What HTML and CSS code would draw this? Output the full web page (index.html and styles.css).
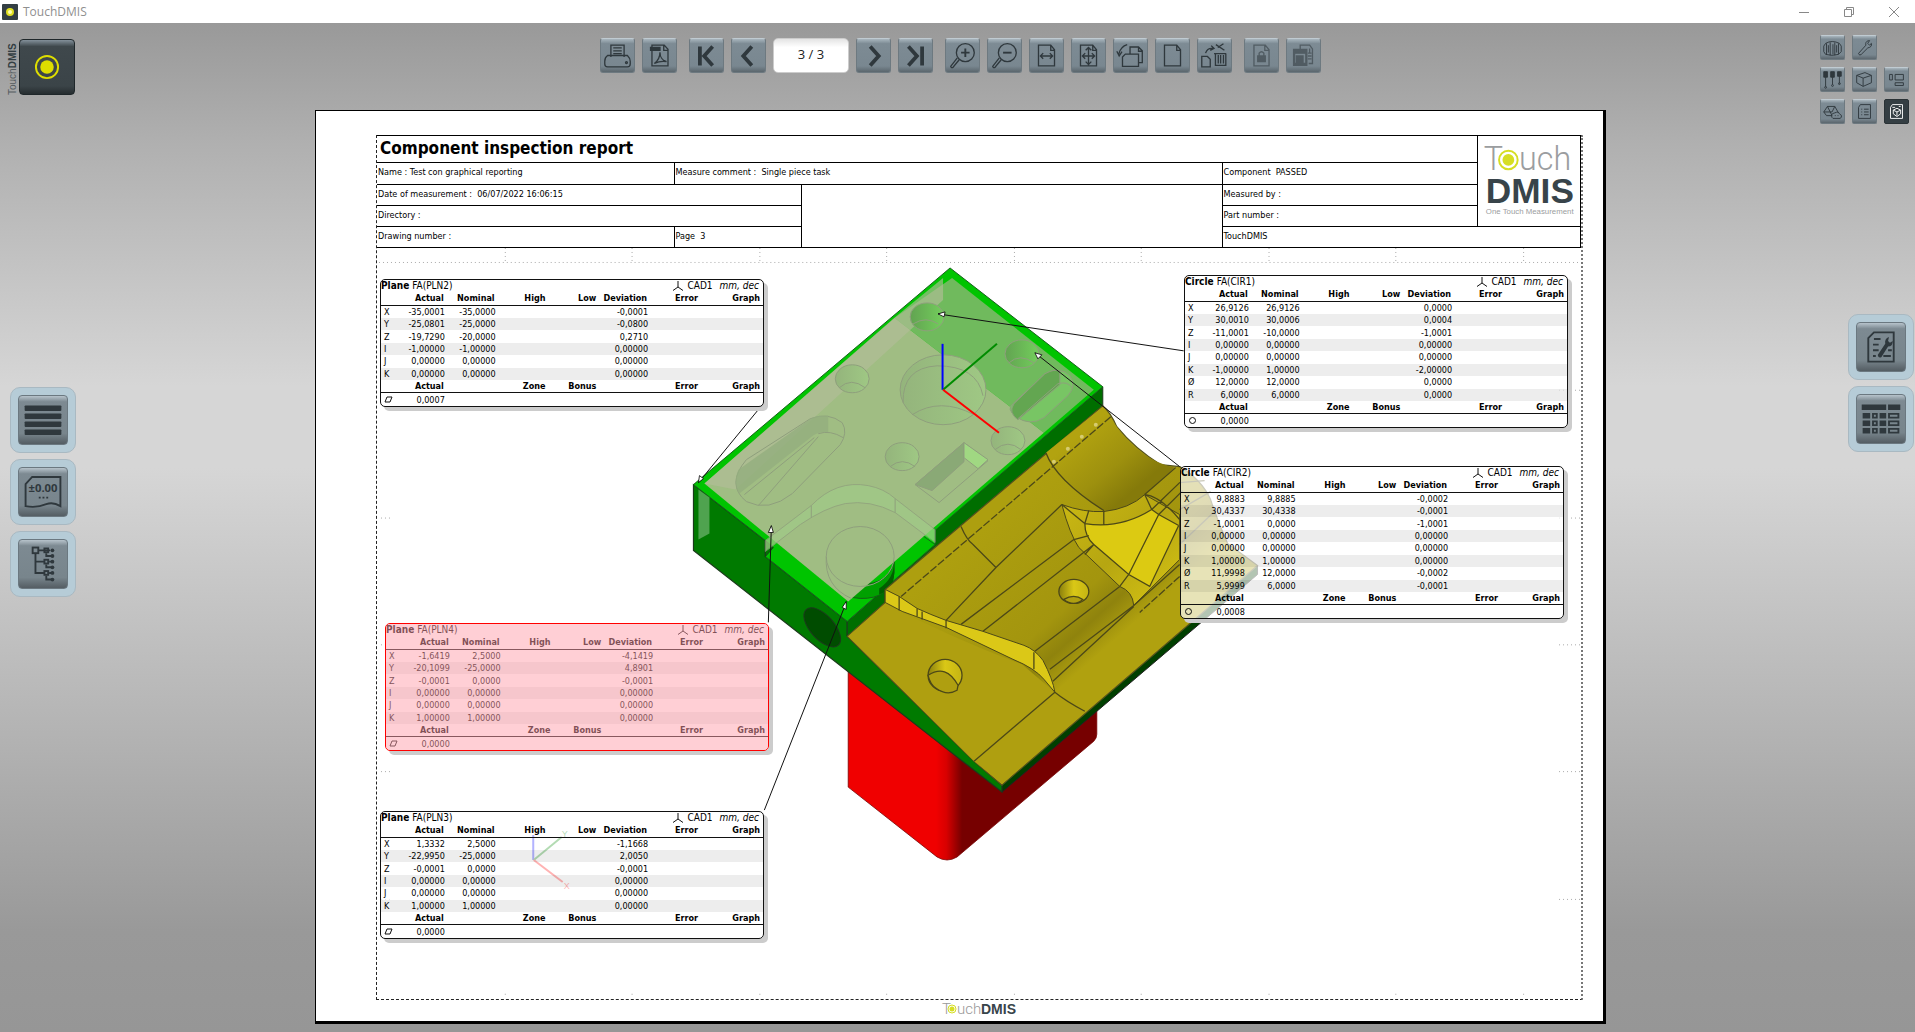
FILE: index.html
```html
<!DOCTYPE html>
<html lang="en">
<head>
<meta charset="utf-8">
<title>TouchDMIS</title>
<link rel="stylesheet" href="styles.css">
</head>
<body>
<header class="titlebar">
  <svg class="app-icon" viewBox="0 0 16 16"><rect width="16" height="16" rx="1" fill="#333e43"/><circle cx="8" cy="8" r="4" fill="#dfdf20"/><circle cx="8" cy="8" r="2" fill="#ffffb0"/></svg>
  <span class="app-name">TouchDMIS</span>
  <div class="window-controls">
    <button aria-label="Minimize"><svg viewBox="0 0 12 12"><path d="M1 6.500h10"/></svg></button>
    <button aria-label="Restore"><svg viewBox="0 0 12 12"><path d="M1.500 3.500h7v7h-7zM3.500 3v-1.500h7v7H9"/></svg></button>
    <button aria-label="Close"><svg viewBox="0 0 12 12"><path d="M1 1l10 10M11 1L1 11"/></svg></button>
  </div>
</header>

<main class="workspace">
  <aside class="side side-left">
    <div class="brand">
      <span class="brand-text">Touch<b>DMIS</b></span>
      <button class="brand-button" aria-label="TouchDMIS menu"><svg viewBox="0 0 56 56"><circle cx="28" cy="28" r="11.500" fill="none" stroke="#dede00" stroke-width="2"/><circle cx="28" cy="28" r="7" fill="#dede00"/></svg></button>
    </div>
    <nav class="rail">
      <button class="rail-button" aria-label="List"><span><svg viewBox="0 0 51 51"><g fill="#2f383d"><rect x="6" y="10" width="39" height="6" rx="1"/><rect x="6" y="18.500" width="39" height="6" rx="1"/><rect x="6" y="27" width="39" height="6" rx="1"/><rect x="6" y="35.500" width="39" height="6" rx="1"/></g></svg></span></button>
      <button class="rail-button" aria-label="Tolerances"><span><svg viewBox="0 0 51 51"><path class="ln" d="M14 9.500h30v31c-5-3-10-4-15-2s-12 4-22 2V17z"/><text x="25.500" y="26" class="tol">±0.00</text><path d="M21 31.500h2m2 0h2m2 0h2" class="ln"/></svg></span></button>
      <button class="rail-button" aria-label="Feature tree"><span><svg viewBox="0 0 51 51"><path class="ln" d="M17.500 14v21h9M21 11h12M17.500 23h9M29 14v3h6M29 26v3h6M32 23h4M29 38v4h6M32 35h4"/><g class="ln"><rect x="14.500" y="8" width="6" height="6"/><rect x="27" y="9" width="4" height="4"/><rect x="27" y="21" width="4" height="4"/><rect x="27" y="33" width="4" height="4"/></g><g fill="#2f383d"><circle cx="35.500" cy="11" r="2"/><circle cx="35.500" cy="17" r="2"/><circle cx="35.500" cy="23" r="2"/><circle cx="35.500" cy="29" r="2"/><circle cx="35.500" cy="35" r="2"/><circle cx="35.500" cy="42" r="2"/></g></svg></span></button>
    </nav>
  </aside>

  <section class="center">
    <div class="toolbar">
      <div class="group">
        <button class="tool" aria-label="Print"><svg viewBox="0 0 35 35"><path d="M10.500 19V6.500h14V19M13 9.500h9M13 12.500h9M13 15.500h9M7 17.500h21q3 3 3 6v3q0 3-3 3H7q-3 0-3-3v-3q0-4 3-6z"/><circle cx="27" cy="25" r="1"/></svg></button>
        <button class="tool" aria-label="Export PDF"><svg viewBox="0 0 35 35"><path d="M9.500 12v16.500h17V11l-4-4.500h-13v3M22 7v5h5"/><path d="M8 9h10v3H8z" fill="#2f383d"/><path d="M12 26c4-3 6-7 6-12 0 5 3 9 7 10-5-1-9 0-13 2z"/></svg></button>
      </div>
      <div class="group">
        <button class="tool" aria-label="First page"><svg viewBox="0 0 35 35"><path class="fat" d="M10.500 8v20M24 8l-9 10 9 10"/></svg></button>
        <button class="tool" aria-label="Previous page"><svg viewBox="0 0 35 35"><path class="fat" d="M21 8l-9 10 9 10"/></svg></button>
        <input class="page-box" aria-label="Page" value="3 / 3">
        <button class="tool" aria-label="Next page"><svg viewBox="0 0 35 35"><path class="fat" d="M14 8l9 10-9 10"/></svg></button>
        <button class="tool" aria-label="Last page"><svg viewBox="0 0 35 35"><path class="fat" d="M10 8l9 10-9 10M24.500 8v20"/></svg></button>
      </div>
      <div class="group">
        <button class="tool" aria-label="Zoom in"><svg viewBox="0 0 35 35"><circle cx="20.500" cy="14.500" r="9.500"/><path d="M14 22l-6.500 8q-2 1-2.500-1L12 20"/><path stroke-width="2" d="M16 14.500h9M20.500 10v9"/></svg></button>
        <button class="tool" aria-label="Zoom out"><svg viewBox="0 0 35 35"><circle cx="20.500" cy="14.500" r="9.500"/><path d="M14 22l-6.500 8q-2 1-2.500-1L12 20"/><path stroke-width="2" d="M16 14.500h9"/></svg></button>
        <button class="tool" aria-label="Fit width"><svg viewBox="0 0 35 35"><path d="M9 6.500h13l4 5v17H9zM22 7v5h4M11 18h13M14 15l-3 3 3 3M21 15l3 3-3 3"/></svg></button>
        <button class="tool" aria-label="Fit page"><svg viewBox="0 0 35 35"><path d="M9 6.500h13l4 5v17H9zM22 7v5h4M11 18h13M14 15l-3 3 3 3M21 15l3 3-3 3M17.500 9v18M14.500 12l3-3 3 3M14.500 24l3 3 3-3"/></svg></button>
        <button class="tool" aria-label="Rotate page"><svg viewBox="0 0 35 35"><path d="M17 16V8.500h9l4 4V25h-4M9 19l3-3h14v13H9zM26 9v4h4M14 6Q7 8 5 16M3 13l2.500 5 3-4.500"/></svg></button>
        <button class="tool" aria-label="New page"><svg viewBox="0 0 35 35"><path d="M9 6.500h13l4 5v17H9zM22 7v5h4"/></svg></button>
        <button class="tool" aria-label="Delete page"><svg viewBox="0 0 35 35"><path d="M4 18.500h6l3 3v8H4zM17 15.500h13M18.500 16v12h11V16M21.500 17v9M24 17v9M27 17v9M19 6l9 6M21 9l6-4M8 15q2-6 8-5M14 7l3 3-4 2" /></svg></button>
      </div>
      <div class="group">
        <button class="tool" disabled aria-label="Lock report"><svg viewBox="0 0 35 35"><path d="M9.500 6.500h12l4 5v17h-16zM21 7v5h4M15 18v-3q2.500-3 5 0v3"/><path d="M13.500 18h8v6h-8z" fill="#2f383d"/></svg></button>
        <button class="tool" disabled aria-label="Report template"><svg viewBox="0 0 35 35"><path d="M14 11V6.500h10l3 4V26h-4M24 10v5M22 15h4M22 18h4M22 21h4"/><path d="M7 11h14v4H7zM10 18h7v7h-7zM7 26h14v2H7zM7 16h1v9H7zM20 16h1v9h-1z" fill="#2f383d"/></svg></button>
      </div>
    </div>

    <article class="sheet">
      <div class="frame">
        <div class="report-head">
          <h1 class="cell c-title">Component inspection report</h1>
          <div class="cell c-name">Name : Test con graphical reporting</div>
          <div class="cell c-comment">Measure comment :&nbsp; Single piece task</div>
          <div class="cell c-state">Component&nbsp; PASSED</div>
          <div class="cell c-date">Date of measurement :&nbsp; 06/07/2022 16:06:15</div>
          <div class="cell c-blank"></div>
          <div class="cell c-by">Measured by :</div>
          <div class="cell c-dir">Directory :</div>
          <div class="cell c-part">Part number :</div>
          <div class="cell c-draw">Drawing number :</div>
          <div class="cell c-page">Page&nbsp; 3</div>
          <div class="cell c-soft">TouchDMIS</div>
          <div class="cell c-logo">
            <svg viewBox="0 0 104 91" role="img" aria-label="TouchDMIS">
              <text x="6" y="34" class="lg-thin">T</text><text x="42" y="34" class="lg-thin">uch</text>
              <circle cx="31" cy="24" r="9.500" fill="none" stroke="#d6de23" stroke-width="2"/><circle cx="31" cy="24" r="6" fill="#d6de23"/>
              <text x="8" y="68" class="lg-bold">DMIS</text><text x="8" y="79" class="lg-tag">One Touch Measurement</text>
            </svg>
          </div>
        </div>

        <div class="canvas">
          <svg class="scene" viewBox="376 248 1206 752" preserveAspectRatio="xMinYMin meet">
            <defs>
              <linearGradient id="redg" gradientUnits="userSpaceOnUse" x1="936" y1="0" x2="962" y2="0"><stop offset="0" stop-color="#f00000"/><stop offset=".4" stop-color="#d80000"/><stop offset="1" stop-color="#760000"/></linearGradient>
              <linearGradient id="yg" gradientUnits="userSpaceOnUse" x1="1040" y1="480" x2="1190" y2="650"><stop offset="0" stop-color="#ad9f0f"/><stop offset=".5" stop-color="#a3950e"/><stop offset=".62" stop-color="#8f830d"/><stop offset=".75" stop-color="#b0a10f"/><stop offset="1" stop-color="#b0a10f"/></linearGradient>
              <linearGradient id="yc" gradientUnits="userSpaceOnUse" x1="1085" y1="430" x2="1135" y2="490"><stop offset="0" stop-color="#b2a310"/><stop offset=".6" stop-color="#9d900e"/><stop offset="1" stop-color="#857a0a"/></linearGradient>
              <linearGradient id="yh" x1="0" y1="0" x2="1" y2="0"><stop offset="0" stop-color="#8a7f0c"/><stop offset=".5" stop-color="#dac816"/><stop offset="1" stop-color="#c4b413"/></linearGradient>
              <linearGradient id="yp" x1="0" y1="0" x2="1" y2="1"><stop offset="0" stop-color="#cbb913"/><stop offset=".5" stop-color="#b6a611"/><stop offset="1" stop-color="#d7c514"/></linearGradient>
              <linearGradient id="gh" x1="0" y1="0" x2="1" y2="0"><stop offset="0" stop-color="#62a351"/><stop offset="1" stop-color="#73ce5c"/></linearGradient>
              <linearGradient id="gl" x1="0" y1="0" x2="1" y2="0"><stop offset="0" stop-color="#94b47c"/><stop offset="1" stop-color="#9fc884"/></linearGradient>
            </defs>
            <g class="guides"><path d="M378 262.500h1204M504.500 248v14M631.500 248v14M759.500 248v14M886.500 248v14M1014.500 248v14M1141.500 248v14M1269.500 248v14M1396.500 248v14M1524.500 248v14"/><path d="M380 518.500h9M380 645.500h9M380 772.500h9M380 900.500h9M1560 390.500h22M1560 518.500h22M1560 645.500h22M1560 772.500h22M1560 900.500h22M504.500 995v2M631.500 995v2M759.500 995v2M886.500 995v2M1014.500 995v2M1141.500 995v2M1269.500 995v2M1396.500 995v2M1524.500 995v2"/></g>

            <path fill="url(#redg)" stroke="#700" stroke-width=".8" d="M848 671V788L937 858Q947 864 957 858L1094 742Q1097 739 1097 735V700L1000 700z"/>
            <path fill="#003f00" stroke="#222" d="M1258 566v9L1002 793v-8z"/>
            <path fill="#007a00" stroke="#1c3a1c" stroke-width="1.200" d="M693 485V551L1002 793V786L974 762 847 637V622L765 557V541z"/>
            <path fill="#006e00" stroke="#1c3a1c" d="M1103 387v19L885 590v14L847 637V622L935 545V530z"/>
            <path fill="#00c400" stroke="#15601a" d="M950 268L1103 387 935 531V545L847 622 765 557V541L693 485z"/>
            <path fill="#00e800" stroke="#15601a" d="M895 502L935 530v15L895 516z"/>
            <path fill="#007800" stroke="#1c3a1c" d="M765 541l8 7-8 9z"/>
            <g transform="rotate(48 822 628)"><ellipse cx="822" cy="628" rx="24" ry="12" fill="#004c00" stroke="#1c3a1c"/></g>
            <path fill="#00a000" d="M826 560q4 38 34 39t34-26v-13q-4 25-34 25t-34-25z" stroke="#155c15"/>
            <path d="M879 589q15-10 15-27l0 12q0 16-15 21z" fill="#005f00"/>

            <path fill="#70ba5d" d="M952 278L1094 390 1044 433 894.500 318z"/>
            <path fill="#a0bd83" d="M894.500 318L1044 433 848 602 704 484z"/>
            <path fill="#b2bd98" d="M943 278v22L735 490l-31-6 190-166z" opacity=".65"/>
            <path fill="#4fa34f" d="M698 490l11 8v36l-11 6z"/>
            <g class="gl">
              <ellipse cx="927" cy="317" rx="17" ry="14" fill="url(#gh)"/><path d="M913 324q13-8 25 0"/>
              <ellipse cx="1022" cy="354" rx="17" ry="14" fill="url(#gh)"/><path d="M1009 363q11-10 25 0"/>
              <ellipse cx="852" cy="379" rx="17" ry="14" fill="url(#gl)"/><path d="M839 388q12-11 26 0"/>
              <ellipse cx="943" cy="390" rx="43" ry="35" fill="url(#gl)"/><path d="M903 403q-1-35 34-37 40 0 46 30M912 415q28-18 62 0"/>
              <ellipse cx="902" cy="457" rx="17" ry="14" fill="url(#gl)"/><path d="M890 467q12-10 25 0"/>
              <ellipse cx="1008" cy="441" rx="17" ry="14" fill="url(#gl)"/><path d="M995 450q13-11 26 0"/>
              <path fill="#78c564" d="M1013 404L1045 374Q1060 366 1070 376 1077 386 1068 396L1044 418Q1030 427 1016 417 1006 409 1013 404z"/><path fill="#63a651" d="M1014 404l31-30q9-5 15-3v14l-42 35q-10-7-4-16z"/><path d="M1018 419l40-35q10-3 14 4"/>
              <path d="M964 443l24 18-49 42-24-18z"/><path fill="#8aa976" d="M964 443v19l-32 29-17-6z"/><path fill="#a0d882" d="M964 443l24 17-10 9-14-11z"/>
              <path d="M746 460L810 419Q828 412 842 423 848 433 840 445L792 494Q768 513 746 502 725 485 746 460z"/><path fill="#93ae7e" stroke="none" d="M738 470l72-51q8-4 18-3v17q-10-2-18 5L739 494q-7-11-1-24z" opacity=".8"/><path d="M818 434q12-4 25 4M758 506l60-69M744 495l70-57"/>
              <path fill="#a0c987" d="M811 506Q836 480 868 486 884 489 895 499L935 530V543L895 513Q870 500 845 504 825 508 800 525L765 552V541z" opacity=".75"/><path d="M895 499v14M811 506v12"/>
              <ellipse cx="860" cy="557" rx="34" ry="30"/><path d="M826 557q-2 30 25 42"/>
            </g>

            <path fill="url(#yg)" stroke="#54511c" stroke-width="1.200" d="M847 637L885 603V590L1103 406Q1111 413 1117 427 1136 450 1161 465L1180 467Q1202 480 1211 500 1219 524 1228 544L1258 566 1002 786 974 762z"/>
            <path fill="#af9f10" d="M848 637L885 604Q955 640 1022 665L1055 693 1085 712 1002 785 974 762z"/>
            <path fill="url(#yc)" d="M1103 407L1117 427Q1140 460 1175 468L1145 495Q1125 515 1104 511 1065 485 1046 453z"/>
            <path fill="url(#yp)" stroke="#4c4818" d="M1062 505Q1084 513 1104 512 1130 509 1145 495L1180 515V560L1134 606Q1133 592 1120 587L1079 548Q1070 535 1062 505z"/>
            <path fill="#dcca12" d="M1085 524Q1120 530 1152 510L1159 515 1179 526 1150 587 1129 575 1094 545Q1084 535 1085 524z"/>
            <path fill="#dbc817" stroke="#4c4818" d="M885 590L899 597 917 609Q930 615 946 621L983 632 1024 646Q1035 650 1043 661 1053 680 1055 693L1044 680Q1035 669 1013 660L946 628 902 612 885 603z"/>
            <g class="yl">
              <path d="M899 597v14M917 609v8M922 612v8M946 621v8M1034 653v17M1055 693L974 762M1055 693Q1066 702 1085 712"/>
              <path d="M961 527Q967 541 973 545L996 568M1046 453Q1056 480 1104 511M946 621L996 568 1062 505M961 625L1074 540M983 632L1094 545M1035 652L1120 587M1050 670L1134 606 1180 565M1053 682L1134 607M1062 505Q1080 520 1085 524 1120 530 1152 510L1159 515 1179 526M1085 524L1089 511M1104 511v14M1085 524Q1085 537 1094 545L1129 575 1150 587 1179 526M1145 495L1152 510M1145 495Q1160 496 1180 520M1074 540L1089 536M1094 545L1085 555M1129 575l-9 12M1129 575L1159 515M1152 510l28-27M1159 515l24-24M1145 495l31-27M1180 483l25-2M1180 510l31-18M1180 545l36-34"/>
              <path stroke-dasharray="8 2" d="M1111 417L901 597M1180 577L1140 613"/>
              <ellipse cx="945" cy="676" rx="17" ry="16" fill="url(#yh)"/><path fill="#af9f10" d="M928 676q18-12 30 10l-1 5q-10 6-21-2-6-4-8-13z"/>
              <ellipse cx="1074" cy="592" rx="15" ry="12" fill="url(#yh)"/><path fill="#af9f10" d="M1064 600q10-6 19 0-9 8-19 0z"/>
            </g>
            <g fill="#d6cb70"><circle cx="1096" cy="425" r="2"/><circle cx="1082" cy="437" r="2"/><circle cx="1068" cy="449" r="2"/><circle cx="1054" cy="462" r="2"/></g>
            <g fill="none" stroke-width="2"><path stroke="#00f" d="M942.500 390v-46"/><path stroke="#008c00" d="M943 390l54-46"/><path stroke="#f00" d="M943 390l56 43"/>
            <path stroke="#00f" d="M532.500 861v-25"/><path stroke="#080" d="M533 861l28-23"/><path stroke="#f00" d="M533 861l29 22"/></g>
            <text x="563" y="890" fill="#f00" class="axis">X</text><text x="561" y="838" fill="#080" class="axis">Y</text>
            <path class="leaders" d="M1184 351L938 314M1180 467L1035 353M762 405L698 483M768 623L771 527M764 811L846 603"/>
            <g fill="#fff" stroke="#000" stroke-width=".8"><path d="M938 314l7-2-1 5zM1035 353l7 2-4 4zM698 483l1-7 4 3zM771 526l-3 7h5zM846 602l-4 6 4 2z"/></g>
          </svg>

          <section class="callout pln2">
            <div class="callout-head"><b>Plane</b> FA(PLN2)<svg viewBox="0 0 12 10"><path d="M6 0v6M6 6L1 9.500M6 6l5 3.500"/></svg><span>CAD1</span><i>mm, dec</i></div>
            <table>
              <tr class="hd"><th><th>Actual<th>Nominal<th>High<th>Low<th>Deviation<th>Error<th>Graph
              <tr><th>X<td>-35,0001<td>-35,0000<td><td><td>-0,0001<td><td>
              <tr><th>Y<td>-25,0801<td>-25,0000<td><td><td>-0,0800<td><td>
              <tr><th>Z<td>-19,7290<td>-20,0000<td><td><td>0,2710<td><td>
              <tr><th>I<td>-1,00000<td>-1,00000<td><td><td>0,00000<td><td>
              <tr><th>J<td>0,00000<td>0,00000<td><td><td>0,00000<td><td>
              <tr><th>K<td>0,00000<td>0,00000<td><td><td>0,00000<td><td>
              <tr class="hd"><th><th>Actual<th><th>Zone<th>Bonus<th><th>Error<th>Graph
              <tr><th><svg viewBox="0 0 9 7"><path d="M3 1h5L6 6H1z"/></svg><td>0,0007<td><td><td><td><td><td>
            </table>
          </section>

          <section class="callout tall cir1">
            <div class="callout-head"><b>Circle</b> FA(CIR1)<svg viewBox="0 0 12 10"><path d="M6 0v6M6 6L1 9.500M6 6l5 3.500"/></svg><span>CAD1</span><i>mm, dec</i></div>
            <table>
              <tr class="hd"><th><th>Actual<th>Nominal<th>High<th>Low<th>Deviation<th>Error<th>Graph
              <tr><th>X<td>26,9126<td>26,9126<td><td><td>0,0000<td><td>
              <tr><th>Y<td>30,0010<td>30,0006<td><td><td>0,0004<td><td>
              <tr><th>Z<td>-11,0001<td>-10,0000<td><td><td>-1,0001<td><td>
              <tr><th>I<td>0,00000<td>0,00000<td><td><td>0,00000<td><td>
              <tr><th>J<td>0,00000<td>0,00000<td><td><td>0,00000<td><td>
              <tr><th>K<td>-1,00000<td>1,00000<td><td><td>-2,00000<td><td>
              <tr><th>Ø<td>12,0000<td>12,0000<td><td><td>0,0000<td><td>
              <tr><th>R<td>6,0000<td>6,0000<td><td><td>0,0000<td><td>
              <tr class="hd"><th><th>Actual<th><th>Zone<th>Bonus<th><th>Error<th>Graph
              <tr><th><svg viewBox="0 0 9 7"><circle cx="4.500" cy="3.500" r="3"/></svg><td>0,0000<td><td><td><td><td><td>
            </table>
          </section>

          <section class="callout tall cir2">
            <div class="callout-head"><b>Circle</b> FA(CIR2)<svg viewBox="0 0 12 10"><path d="M6 0v6M6 6L1 9.500M6 6l5 3.500"/></svg><span>CAD1</span><i>mm, dec</i></div>
            <table>
              <tr class="hd"><th><th>Actual<th>Nominal<th>High<th>Low<th>Deviation<th>Error<th>Graph
              <tr><th>X<td>9,8883<td>9,8885<td><td><td>-0,0002<td><td>
              <tr><th>Y<td>30,4337<td>30,4338<td><td><td>-0,0001<td><td>
              <tr><th>Z<td>-1,0001<td>0,0000<td><td><td>-1,0001<td><td>
              <tr><th>I<td>0,00000<td>0,00000<td><td><td>0,00000<td><td>
              <tr><th>J<td>0,00000<td>0,00000<td><td><td>0,00000<td><td>
              <tr><th>K<td>1,00000<td>1,00000<td><td><td>0,00000<td><td>
              <tr><th>Ø<td>11,9998<td>12,0000<td><td><td>-0,0002<td><td>
              <tr><th>R<td>5,9999<td>6,0000<td><td><td>-0,0001<td><td>
              <tr class="hd"><th><th>Actual<th><th>Zone<th>Bonus<th><th>Error<th>Graph
              <tr><th><svg viewBox="0 0 9 7"><circle cx="4.500" cy="3.500" r="3"/></svg><td>0,0008<td><td><td><td><td><td>
            </table>
          </section>

          <section class="callout selected pln4">
            <div class="callout-head"><b>Plane</b> FA(PLN4)<svg viewBox="0 0 12 10"><path d="M6 0v6M6 6L1 9.500M6 6l5 3.500"/></svg><span>CAD1</span><i>mm, dec</i></div>
            <table>
              <tr class="hd"><th><th>Actual<th>Nominal<th>High<th>Low<th>Deviation<th>Error<th>Graph
              <tr><th>X<td>-1,6419<td>2,5000<td><td><td>-4,1419<td><td>
              <tr><th>Y<td>-20,1099<td>-25,0000<td><td><td>4,8901<td><td>
              <tr><th>Z<td>-0,0001<td>0,0000<td><td><td>-0,0001<td><td>
              <tr><th>I<td>0,00000<td>0,00000<td><td><td>0,00000<td><td>
              <tr><th>J<td>0,00000<td>0,00000<td><td><td>0,00000<td><td>
              <tr><th>K<td>1,00000<td>1,00000<td><td><td>0,00000<td><td>
              <tr class="hd"><th><th>Actual<th><th>Zone<th>Bonus<th><th>Error<th>Graph
              <tr><th><svg viewBox="0 0 9 7"><path d="M3 1h5L6 6H1z"/></svg><td>0,0000<td><td><td><td><td><td>
            </table>
          </section>

          <section class="callout pln3">
            <div class="callout-head"><b>Plane</b> FA(PLN3)<svg viewBox="0 0 12 10"><path d="M6 0v6M6 6L1 9.500M6 6l5 3.500"/></svg><span>CAD1</span><i>mm, dec</i></div>
            <table>
              <tr class="hd"><th><th>Actual<th>Nominal<th>High<th>Low<th>Deviation<th>Error<th>Graph
              <tr><th>X<td>1,3332<td>2,5000<td><td><td>-1,1668<td><td>
              <tr><th>Y<td>-22,9950<td>-25,0000<td><td><td>2,0050<td><td>
              <tr><th>Z<td>-0,0001<td>0,0000<td><td><td>-0,0001<td><td>
              <tr><th>I<td>0,00000<td>0,00000<td><td><td>0,00000<td><td>
              <tr><th>J<td>0,00000<td>0,00000<td><td><td>0,00000<td><td>
              <tr><th>K<td>1,00000<td>1,00000<td><td><td>0,00000<td><td>
              <tr class="hd"><th><th>Actual<th><th>Zone<th>Bonus<th><th>Error<th>Graph
              <tr><th><svg viewBox="0 0 9 7"><path d="M3 1h5L6 6H1z"/></svg><td>0,0000<td><td><td><td><td><td>
            </table>
          </section>
        </div>
      </div>
      <footer class="sheet-foot">
        <svg viewBox="0 0 78 18" role="img" aria-label="TouchDMIS"><text x="1" y="14" class="ft-thin">T</text><text x="16" y="14" class="ft-thin">uch</text><circle cx="11" cy="9" r="4" fill="none" stroke="#d6de23"/><circle cx="11" cy="9" r="2.500" fill="#d6de23"/><text x="40" y="14" class="ft-bold">DMIS</text></svg>
      </footer>
    </article>
  </section>

  <aside class="side side-right">
    <nav class="modes">
      <button class="mode" aria-label="Machine"><svg viewBox="0 0 25 25"><path d="M5 8q7-4 15 0l2 3v6l-3 3q-7 2-14 0l-2-3v-6zM6 8v12M10 7v14M15 7v14M19 8v12M8 10v8M13 9v11M17 10v8"/></svg></button>
      <button class="mode" aria-label="Settings"><svg viewBox="0 0 25 25"><path d="M6 19l8-9q-1-4 3-5l1 0-2 3 2 2 2-2q1 4-4 5L9 20q-2 2-3-1z"/></svg></button>
      <button class="mode row-start" aria-label="Probes"><svg viewBox="0 0 25 25"><path d="M5 9v11M12.500 9v9M20 8v9"/><path d="M3 4h4v6H3zM10.500 4h4v6h-4zM18 4h4v5h-4z" fill="#2f383d"/><circle cx="5" cy="21" r="1"/><circle cx="12.500" cy="19" r="1"/><circle cx="20" cy="17" r="1"/></svg></button>
      <button class="mode" aria-label="Alignment"><svg viewBox="0 0 25 25"><path d="M4 8l9-3 7 3v8l-9 4-7-4zM4 8l7 3 9-3M11 11v9"/></svg></button>
      <button class="mode" aria-label="Layout"><svg viewBox="0 0 25 25"><path d="M5 7h3v6H5zM11 7h9v6h-9zM11 16h9v3h-9z"/></svg></button>
      <button class="mode" aria-label="Features"><svg viewBox="0 0 25 25"><path d="M3 13l4-6h8l4 7M3 13l3 4h6M3 13h9l3-6M7 7l5 10M12 19q-2-4 3-5 4-2 5 1 4 2 1 5h-8zM15 17h1M18 17h1"/></svg></button>
      <button class="mode" aria-label="Program"><svg viewBox="0 0 25 25"><path d="M8 5h11v15H6V8zM9 10h1M12 10h5M9 13h1M12 13h5M9 16h1M12 16h5"/></svg></button>
      <button class="mode active" aria-label="Graphical report"><svg viewBox="0 0 25 25"><path d="M8 5h11v15H6V8zM9 11l4-2 4 2v4l-4 3-4-3zM9 11l4 2 4-2M13 13v4M8 8h3M15 7h2"/></svg></button>
    </nav>
    <nav class="rail rail-right">
      <button class="rail-button" aria-label="Report settings"><span><svg viewBox="0 0 51 51"><path class="ln" d="M18 10h21v31H12V16zM18 17h7M17 23h6M17 29h6M17 35h3M33 29h4M28 35h8"/><path d="M22 34l8-12q-1-5 4-7l-1 4 2 2 3-2q0 6-5 6L26 36q-3 2-4-2z" fill="#2f383d"/></svg></span></button>
      <button class="rail-button" aria-label="Report table"><span><svg viewBox="0 0 51 51"><path fill="#2f383d" d="M5 10h26v6H5zM33 10h13v6H33zM6 19h8v6H6zM24 19h7v6h-7zM6 27h8v6H6zM24 27h7v6h-7zM6 35h8v6H6zM24 35h7v6h-7z"/><path class="ln" d="M17 20h4v4h-4zM34 20h10v4H34zM17 28h4v4h-4zM34 28h10v4H34zM17 36h4v4h-4zM34 36h10v4H34z"/></svg></span></button>
    </nav>
  </aside>
</main>
</body>
</html>
```
FILE: styles.css
```css
* { box-sizing: border-box; }
body {
  margin: 0;
  min-height: 100vh;
  display: flex;
  flex-direction: column;
  font-family: "Open Sans", "Noto Sans", sans-serif;
  font-size: 12px;
}
button { padding: 0; border: 0; background: none; display: block; }
svg { display: block; }

/* Title bar */
.titlebar { height: 23px; display: flex; align-items: center; padding: 0 15px 0 2px; background: #fff; color: #8f8f8f; }
.app-icon { width: 16px; height: 16px; margin-right: 5px; }
.window-controls { margin-left: auto; display: flex; gap: 33px; }
.window-controls svg { width: 12px; height: 12px; fill: none; stroke: #888; }

/* Workspace */
.workspace {
  flex: 1;
  display: grid;
  grid-template-columns: 315px minmax(0, 1fr) 309px;
  background: linear-gradient(#999 0, #b0b0b0 12%, #d6d6d6 36%, #d6d6d6 44%, #999 90%, #969696 100%);
}
.side { display: flex; flex-direction: column; }
.side-left { padding: 16px 0 0 8px; }
.side-right { padding: 12px 0 0; align-items: flex-end; }
.brand { display: flex; gap: 1px; height: 56px; }
.brand-text { writing-mode: vertical-rl; rotate: 180deg; width: 10px; font: 10px/10px "Liberation Sans", sans-serif; color: #555c60; }
.brand-text b { color: #333e43; }
.brand-button { width: 56px; height: 56px; border: 1px solid #1f272a; border-radius: 4px; background: linear-gradient(#83909a, #3f484c 12%, #3b4448 85%, #262d30); }
.rail { display: flex; flex-direction: column; gap: 6px; padding-left: 2px; margin-top: 292px; }
.rail-right { margin: 190px 1px 0 0; padding: 0; }
.rail-button { width: 66px; height: 66px; padding: 7px; border: 1px solid #a9b9c2; border-radius: 10px; background: #b6ccd7; }
.rail-button span { display: block; width: 50px; height: 50px; border-radius: 4px; border: 1px solid #6b7880; background: linear-gradient(#b7c3cb, #7d8a92 12%, #78858c 78%, #545d63); }
.ln { fill: none; stroke: #2f383d; stroke-width: 2; }
.tol { font: bold 12px "Open Sans", sans-serif; fill: #2f383d; text-anchor: middle; }

.modes { display: grid; grid-template-columns: repeat(3, 25px); gap: 7px; padding-right: 6px; }
.row-start { grid-column: 1; }
.mode, .tool { border: 1px solid #6d7980; border-top-color: #c0cbd2; background: linear-gradient(#a9b6be, #7d8b94 14%, #798790 82%, #5b666d); }
.mode { width: 25px; height: 25px; border-radius: 2px; }
.mode svg, .tool svg { width: 100%; height: 100%; fill: none; stroke: #2f383d; stroke-width: 1; }
.mode.active { background: #343e43; border-color: #2a3236; }
.mode.active svg { stroke: #fff; }

/* Toolbar */
.center { display: flex; flex-direction: column; padding-bottom: 9px; }
.toolbar { height: 87px; padding-top: 15px; display: flex; justify-content: center; gap: 12px; }
.group { display: flex; gap: 7px; }
.tool { width: 35px; height: 35px; border-radius: 3px; }
.tool svg { stroke-width: 1.4; }
.tool .fat { stroke-width: 4; }
.tool:disabled svg { opacity: .55; }
.page-box { width: 76px; height: 35px; border: 1px solid #ccc; border-radius: 5px; background: linear-gradient(#e4e4e4, #fff 25%); font: 13px "Open Sans", sans-serif; text-align: center; color: #222; padding: 0 0 3px; }

/* Report sheet */
.sheet { flex: 1; display: flex; flex-direction: column; background: #fff; border: solid #000; border-width: 1px 3px 3px 1px; padding: 24px 20px 0 60px; }
.frame { flex: 1; display: flex; flex-direction: column; border: 1px dashed #222; border-right: 2px dotted #777; }
.report-head, .callout { font-family: "DejaVu Sans Condensed", "DejaVu Sans", sans-serif; color: #000; }
.report-head { display: grid; grid-template-columns: 298fr 128fr 421fr 256fr 103fr; grid-template-rows: 27px 22px 21px 21px 21px; border-top: 1px solid #000; font-size: 9px; margin-top: -1px; }
.cell { border: solid #000; border-width: 0 1px 1px 0; padding: 0 1px; line-height: 18px; white-space: nowrap; }
.c-title { grid-area: 1 / 1 / 2 / 5; margin: 0; padding: 0 3px; font-size: 17px; line-height: 24px; }
.c-name { grid-area: 2 / 1; }
.c-comment { grid-area: 2 / 2 / 3 / 4; }
.c-state { grid-area: 2 / 4; }
.c-date { grid-area: 3 / 1 / 4 / 3; }
.c-blank { grid-area: 3 / 3 / 6 / 4; }
.c-by { grid-area: 3 / 4; }
.c-dir { grid-area: 4 / 1 / 5 / 3; }
.c-part { grid-area: 4 / 4; }
.c-draw { grid-area: 5 / 1; }
.c-page { grid-area: 5 / 2; }
.c-soft { grid-area: 5 / 4 / 6 / 6; }
.c-logo { grid-area: 1 / 5 / 5 / 6; padding: 0; }
.c-logo svg { width: 100%; height: 90px; }
.lg-thin { font: 300 33px "Roboto", sans-serif; fill: #9b9da0; }
.lg-bold { font: bold 36px "Liberation Sans", sans-serif; fill: #38444a; }
.lg-tag { font: 8px "Liberation Sans", sans-serif; fill: #9b9da0; }

/* Drawing area: model, leader lines and measurement callouts */
.canvas { flex: 1; position: relative; min-height: 751px; }
.scene { position: absolute; inset: 0; width: 100%; height: 100%; }
.guides path { fill: none; stroke: #aaa; stroke-dasharray: 1 3; }
.gl { fill: none; stroke: #8f9f7c; stroke-width: 1; }
.yl { fill: none; stroke: #4c4818; stroke-width: 1.3; }
.leaders { fill: none; stroke: #111; stroke-width: 1; }
.axis { font: 9px "Liberation Sans", sans-serif; }

.callout { position: absolute; width: 384px; height: 128px; display: flex; flex-direction: column; background: rgba(255, 255, 255, .7); border: 1px solid #111; border-radius: 5px; box-shadow: 4px 4px 0 #ccc; overflow: hidden; font-size: 9px; line-height: 10px; }
.callout.tall { height: 153px; }
.pln2 { left: 3px; top: 31px; }
.cir1 { left: 807px; top: 27px; }
.cir2 { left: 803px; top: 218px; }
.pln4 { left: 8px; top: 375px; }
.pln3 { left: 3px; top: 563px; }
.selected { border-color: #f00; }
.selected::after { content: ""; position: absolute; inset: 0; background: rgba(255, 160, 172, .5); }
.callout-head { display: flex; height: 12px; align-items: center; gap: 3px; font-size: 10px; padding-right: 4px; white-space: nowrap; }
.callout-head svg { width: 12px; height: 10px; margin-left: auto; fill: none; stroke: #111; }
.callout-head i { margin-left: 4px; }
table { flex: 1; width: 100%; table-layout: fixed; border-collapse: collapse; }
th, td { padding: 0 2px 0 0; text-align: right; font-weight: 400; }
th:first-child { width: 15px; padding-left: 3px; text-align: left; }
th:first-child svg { width: 9px; height: 7px; fill: none; stroke: #111; }
th:last-child, td:last-child { width: 62px; padding-right: 6px; }
.hd { border-bottom: 1px solid #111; }
.hd th { font-weight: 700; padding-right: 3px; }
tr:nth-child(odd):not(.hd):not(:last-child) { background: rgba(0, 0, 0, .07); }

.sheet-foot { height: 21px; display: flex; justify-content: center; }
.sheet-foot svg { width: 78px; height: 18px; }
.ft-thin { font: 300 15px "Roboto", sans-serif; fill: #999; }
.ft-bold { font: bold 14px "Liberation Sans", sans-serif; fill: #38444a; }
```
